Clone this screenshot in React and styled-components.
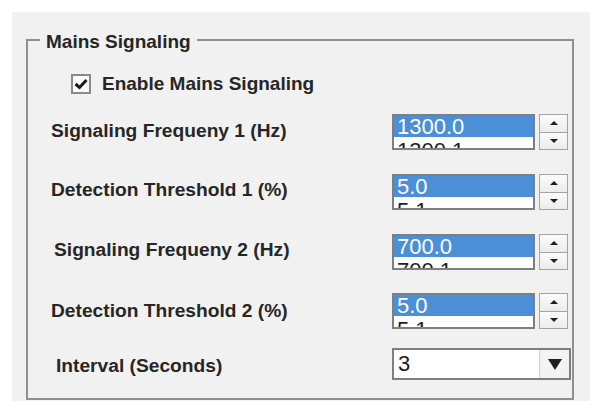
import styled, { createGlobalStyle } from 'styled-components'

const GlobalStyle = createGlobalStyle`
  html, body {
    margin: 0;
    padding: 0;
    background: #ffffff;
  }
  body {
    font-family: "Liberation Sans", Arial, sans-serif;
  }
`

const Panel = styled.div`
  margin: 12px 0 0 12px;
  width: 578px;
  height: 389px;
  box-sizing: border-box;
  padding: 15px 16px 0 14px;
  background: #f1f1f1;
`

const Group = styled.fieldset`
  margin: 0;
  padding: 0 0 18px 0;
  border: 2px solid #8f8f8f;
  min-width: 0;
`

const Legend = styled.legend`
  margin-left: 12px;
  padding: 4px 6px 0;
  font-size: 19px;
  line-height: 22px;
  font-weight: bold;
  color: #262626;
`

const CheckRow = styled.label`
  display: flex;
  align-items: center;
  gap: 11px;
  margin: 20px 0 0 43px;
  font-size: 19px;
  line-height: 22px;
  font-weight: bold;
  color: #262626;
`

const CheckBox = styled.span`
  width: 20px;
  height: 20px;
  box-sizing: border-box;
  border: 2px solid #8a8a8a;
  background: #fbfbfb;
  display: flex;
  align-items: center;
  justify-content: center;
`

const Row = styled.div`
  display: grid;
  grid-template-columns: 1fr 180px;
  align-items: center;
  height: ${p => p.$height}px;
  margin-top: ${p => p.$space}px;
`

const Label = styled.span`
  padding-left: ${p => p.$indent}px;
  margin: ${p => (p.$dy > 0 ? `${p.$dy * 2}px 0 0` : `0 0 ${-p.$dy * 2}px`)};
  font-size: 19.2px;
  line-height: 22px;
  font-weight: bold;
  color: #262626;
  white-space: nowrap;
`

const Spinner = styled.div`
  display: flex;
  gap: 4px;
  height: 36px;
`

const ListBox = styled.div`
  width: 143px;
  height: 36px;
  box-sizing: border-box;
  border: 2px solid #7f7f7f;
  background: #ffffff;
  overflow: hidden;
`

const Item = styled.div`
  height: 21px;
  padding: ${p => (p.$selected ? 0 : 3)}px 0 0 3px;
  font-size: 22px;
  line-height: 21px;
  color: ${p => (p.$selected ? '#ffffff' : '#1c1c1c')};
  background: ${p => (p.$selected ? '#4a8fd7' : 'transparent')};
`

const SpinColumn = styled.div`
  display: flex;
  flex-direction: column;
  width: 29px;
`

const SpinButton = styled.button`
  flex: 1;
  padding: 0;
  margin: 0;
  border: 1px solid #a4a4a4;
  border-top-width: ${p => (p.$down ? 0 : 1)}px;
  background: linear-gradient(#fbfbfb, #ececec);
  display: flex;
  align-items: center;
  justify-content: center;
`

const Combo = styled.div`
  display: flex;
  width: 179px;
  height: 32px;
  box-sizing: border-box;
  border: 2px solid #7f7f7f;
  background: #ffffff;
`

const ComboValue = styled.span`
  flex: 1;
  padding-left: 4px;
  font-size: 22px;
  line-height: 28px;
  color: #1c1c1c;
`

const ComboButton = styled.span`
  width: 29px;
  border-left: 1px solid #d0d0d0;
  background: #f3f3f3;
  display: flex;
  align-items: center;
  justify-content: center;
`

const Arrow = ({ up, w = 8, h = 4 }) => (
  <svg width={w} height={h} viewBox={`0 0 ${w} ${h}`}>
    <polygon
      points={up ? `0,${h} ${w / 2},0 ${w},${h}` : `0,0 ${w},0 ${w / 2},${h}`}
      fill="#1e1e1e"
    />
  </svg>
)

const SpinField = ({ value, next }) => (
  <Spinner>
    <ListBox>
      <Item $selected>{value}</Item>
      <Item>{next}</Item>
    </ListBox>
    <SpinColumn>
      <SpinButton>
        <Arrow up />
      </SpinButton>
      <SpinButton $down>
        <Arrow />
      </SpinButton>
    </SpinColumn>
  </Spinner>
)

const fields = [
  { label: 'Signaling Frequeny 1 (Hz)', value: '1300.0', next: '1300.1', indent: 23, dy: -1, space: 19 },
  { label: 'Detection Threshold 1 (%)', value: '5.0', next: '5.1', indent: 23, dy: -2, space: 24 },
  { label: 'Signaling Frequeny 2 (Hz)', value: '700.0', next: '700.1', indent: 26, dy: -2, space: 24 },
  { label: 'Detection Threshold 2 (%)', value: '5.0', next: '5.1', indent: 23, dy: 0, space: 23 },
]

const App = () => {
  return (
    <>
      <GlobalStyle />
      <Panel>
        <Group>
          <Legend>Mains Signaling</Legend>
          <CheckRow>
            <CheckBox>
              <svg width="14" height="12" viewBox="0 0 14 12">
                <path d="M1.5 6 L5.5 9.5 L12.5 2" stroke="#1a1a1a" strokeWidth="3" fill="none" />
              </svg>
            </CheckBox>
            Enable Mains Signaling
          </CheckRow>
          {fields.map(f => (
            <Row key={f.label} $height={36} $space={f.space}>
              <Label $indent={f.indent} $dy={f.dy}>{f.label}</Label>
              <SpinField value={f.value} next={f.next} />
            </Row>
          ))}
          <Row $height={32} $space={19}>
            <Label $indent={28} $dy={2}>Interval (Seconds)</Label>
            <Combo>
              <ComboValue>3</ComboValue>
              <ComboButton>
                <Arrow w={14} h={11} />
              </ComboButton>
            </Combo>
          </Row>
        </Group>
      </Panel>
    </>
  )
}

export default App
